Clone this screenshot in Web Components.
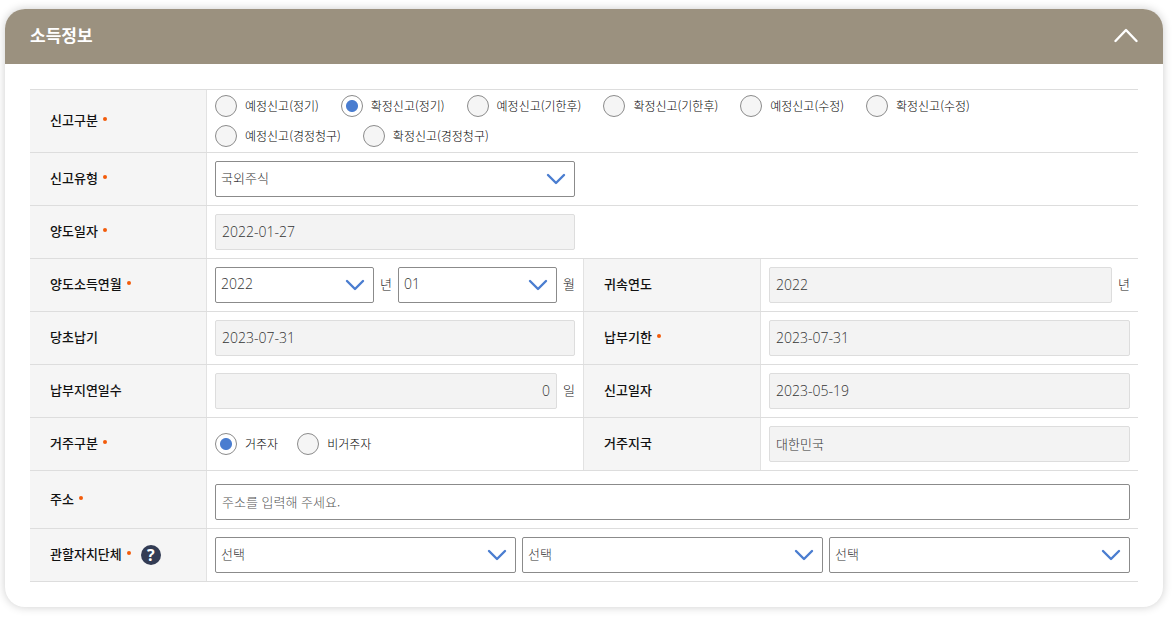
<!DOCTYPE html>
<html lang="ko">
<head>
<meta charset="utf-8">
<meta name="viewport" content="width=device-width, initial-scale=1">
<title>소득정보</title>
<style>
  body {
    margin: 0;
    padding: 9px 12px 14px 5px;
    background: #fff;
    color: #222;
    font-family: "Noto Sans CJK KR", sans-serif;
    font-size: 13px;
    line-height: 20px;
  }
</style>
</head>
<body>
<info-panel heading="소득정보">
  <form-row>
    <radio-field wide label="신고구분" required name="report-kind" checked="확정신고(정기)"
      choices="예정신고(정기),확정신고(정기),예정신고(기한후),확정신고(기한후),예정신고(수정),확정신고(수정),예정신고(경정청구),확정신고(경정청구)"></radio-field>
  </form-row>
  <form-row>
    <select-field label="신고유형" required choices="국외주식"></select-field>
  </form-row>
  <form-row>
    <text-field label="양도일자" required readonly numeric value="2022-01-27"></text-field>
  </form-row>
  <form-row>
    <select-field label="양도소득연월" required numeric choices="2022|년,01|월"></select-field>
    <text-field label="귀속연도" readonly numeric value="2022" unit="년"></text-field>
  </form-row>
  <form-row>
    <text-field label="당초납기" readonly numeric value="2023-07-31"></text-field>
    <text-field label="납부기한" required readonly numeric value="2023-07-31"></text-field>
  </form-row>
  <form-row>
    <text-field label="납부지연일수" readonly numeric align-end value="0" unit="일"></text-field>
    <text-field label="신고일자" readonly numeric value="2023-05-19"></text-field>
  </form-row>
  <form-row>
    <radio-field compact label="거주구분" required name="residency" checked="거주자" choices="거주자,비거주자"></radio-field>
    <text-field label="거주지국" readonly value="대한민국"></text-field>
  </form-row>
  <form-row>
    <text-field wide roomy label="주소" required placeholder="주소를 입력해 주세요."></text-field>
  </form-row>
  <form-row>
    <select-field wide label="관할자치단체" required help choices="선택,선택,선택"></select-field>
  </form-row>
</info-panel>

<script>
class InfoPanel extends HTMLElement {
  constructor() {
    super();
    this.attachShadow({ mode: "open" }).innerHTML = `
      <style>
        :host { display: block; border-radius: 20px; background: #fff; box-shadow: 0 0 10px rgba(0, 0, 0, .2); }
        header {
          display: flex; align-items: center; justify-content: space-between;
          height: 55px; padding: 0 25px 3px; box-sizing: border-box;
          border-radius: 20px 20px 0 0; background: #9b917f; color: #fff;
        }
        h2 { margin: 0; font-size: 17px; line-height: 24px; font-weight: 700; }
        button { display: block; padding: 0; border: 0; background: none; color: inherit; cursor: pointer; }
        svg { display: block; }
        .rows { margin: 25px; border-top: 1px solid #ddd; }
        .body { display: flow-root; }
      </style>
      <header>
        <h2></h2>
        <button type="button" aria-label="접기" aria-expanded="true">
          <svg width="24" height="16" viewBox="0 0 24 16" fill="none" stroke="currentColor" stroke-width="2.4" stroke-linecap="round" stroke-linejoin="round"><path d="M1.5 14 12 3 22.5 14"/></svg>
        </button>
      </header>
      <div class="body"><div class="rows"><slot></slot></div></div>`;
  }
  connectedCallback() {
    const root = this.shadowRoot;
    root.querySelector("h2").textContent = this.getAttribute("heading");
    const button = root.querySelector("button");
    const body = root.querySelector(".body");
    button.addEventListener("click", () => {
      body.hidden = !body.hidden;
      body.style.display = body.hidden ? "none" : "";
      button.setAttribute("aria-expanded", String(!body.hidden));
    });
  }
}

class FormRow extends HTMLElement {
  constructor() {
    super();
    this.attachShadow({ mode: "open" }).innerHTML = `
      <style>
        :host { display: grid; grid-template-columns: 553fr 555fr; border-bottom: 1px solid #ddd; }
        ::slotted([wide]) { grid-column: 1 / -1; }
        ::slotted(:nth-child(2)) { border-left: 1px solid #e2e2e2; }
      </style>
      <slot></slot>`;
  }
}

const fieldStyle = `
  :host { display: grid; grid-template-columns: 177px 1fr; min-width: 0; }
  .name {
    display: flex; align-items: center; gap: 5px; box-sizing: border-box;
    padding: 0 8px 2px 20px; border-right: 1px solid #e2e2e2; background: #f5f5f5;
    font-size: 13px; line-height: 20px; font-weight: 500; color: #111;
  }
  .dot { width: 4px; height: 4px; margin-bottom: 2px; border-radius: 50%; background: #f25b0a; }
  .help {
    width: 20px; height: 20px; margin: 2px 0 0 5px; padding: 0; border: 0; border-radius: 50%;
    background: #333c54; color: #fff; font: 700 16px/20px "Open Sans", sans-serif; cursor: pointer;
  }
  .content { display: flex; align-items: center; gap: 6px; min-width: 0; padding: 8px; }
  :host([roomy]) .content { padding-top: 13px; }
  input[type=text], select {
    box-sizing: border-box; width: 100%; min-width: 0; height: 36px; margin: 0;
    border: 1px solid #8b8b8b; border-radius: 2px; background: #fff; color: #333;
    font-family: inherit; font-size: 13px; font-weight: 300; line-height: 20px; outline-offset: 1px;
  }
  input[type=text] { flex: 1; padding: 0 6px 2px; }
  input[readonly] { border-color: #ddd; background: #f3f3f3; }
  :host([align-end]) input { text-align: right; }
  :host([numeric]) input, :host([numeric]) select { font-family: "Open Sans", "Noto Sans CJK KR", sans-serif; font-size: 14px; }
  input::placeholder { color: #555; opacity: 1; }
  .unit { padding-bottom: 2px; color: #222; font-weight: 300; }
`;

class BaseField extends HTMLElement {
  connectedCallback() {
    if (this.shadowRoot) return;
    const name = this.getAttribute("label");
    this.attachShadow({ mode: "open" }).innerHTML = `
      <style>${fieldStyle}${this.extraStyle()}</style>
      <div class="name">
        <label id="name" for="control">${name}</label>
        ${this.hasAttribute("required") ? '<span class="dot"></span>' : ""}
        ${this.hasAttribute("help") ? '<button class="help" type="button">?</button>' : ""}
      </div>
      <div class="content">${this.control(name)}</div>`;
  }
  extraStyle() { return ""; }
  choices() { return this.getAttribute("choices").split(","); }
}

class TextField extends BaseField {
  control() {
    const attr = key => this.hasAttribute(key) ? `${key}="${this.getAttribute(key)}"` : "";
    const unit = this.getAttribute("unit");
    return `<input type="text" id="control" ${attr("value")} ${attr("placeholder")} ${attr("readonly")} ${attr("required")}>
      ${unit ? `<span class="unit">${unit}</span>` : ""}`;
  }
}

class SelectField extends BaseField {
  extraStyle() {
    return `
      .select { display: grid; flex: 1; min-width: 0; align-items: center; }
      select, svg { grid-area: 1 / 1; }
      select { appearance: none; padding: 0 32px 2px 5px; }
      svg { justify-self: end; margin-right: 9px; pointer-events: none; }`;
  }
  control(name) {
    return this.choices().map((choice, i) => {
      const [text, unit] = choice.split("|");
      return `<span class="select">
          <select ${i ? `aria-label="${name} ${i + 1}"` : 'id="control"'}><option>${text}</option></select>
          <svg width="20" height="12" viewBox="0 0 20 12" fill="none" stroke="#4a7dd0" stroke-width="2.4" stroke-linecap="round" stroke-linejoin="round"><path d="M2 2 10 10 18 2"/></svg>
        </span>${unit ? `<span class="unit">${unit}</span>` : ""}`;
    }).join("");
  }
}

class RadioField extends BaseField {
  extraStyle() {
    return `
      .content { padding: 5px 40px 5px 8px; }
      .group { display: flex; flex-wrap: wrap; gap: 8px 22px; }
      :host([compact]) .content { padding: 15px 8px; }
      :host([compact]) .group { column-gap: 19px; }
      .choice { display: flex; align-items: center; gap: 8px; font-size: 12px; font-weight: 300; line-height: 20px; color: #000; }
      input {
        appearance: none; box-sizing: border-box; width: 22px; height: 22px; margin: 0;
        border: 1px solid #8b8b8b; border-radius: 50%; background: #f5f5f5;
      }
      input:checked { background: radial-gradient(circle, #4a7dd0 5.5px, #fff 6.5px); }`;
  }
  control() {
    const checked = this.getAttribute("checked");
    return `<div class="group" role="radiogroup" aria-labelledby="name">${this.choices().map((text, i) => `
      <label class="choice"><input type="radio" name="${this.getAttribute("name")}" ${i ? "" : 'id="control"'} ${text === checked ? "checked" : ""}>${text}</label>`).join("")}</div>`;
  }
}

customElements.define("info-panel", InfoPanel);
customElements.define("form-row", FormRow);
customElements.define("text-field", TextField);
customElements.define("select-field", SelectField);
customElements.define("radio-field", RadioField);
</script>
</body>
</html>
